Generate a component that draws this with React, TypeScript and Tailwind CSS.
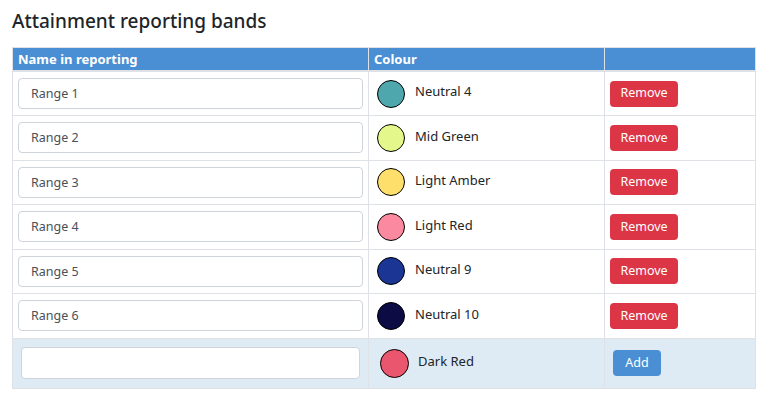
import React from 'react';

const bands = [
  { name: 'Range 1', colour: 'Neutral 4', hex: '#4fa7ae' },
  { name: 'Range 2', colour: 'Mid Green', hex: '#e4f78a' },
  { name: 'Range 3', colour: 'Light Amber', hex: '#fedf6b' },
  { name: 'Range 4', colour: 'Light Red', hex: '#fb8aa0' },
  { name: 'Range 5', colour: 'Neutral 9', hex: '#1a3593' },
  { name: 'Range 6', colour: 'Neutral 10', hex: '#0c0b44' },
];

export default function App() {
  return (
    <div className="bg-white w-[771px] h-[401px] px-3 pt-[7px] text-[#212529]" style={{ fontFamily: '"Noto Sans", "Open Sans", sans-serif' }}>
      <h2 className="text-[19px] font-medium leading-[28px] mb-[12px]">Attainment reporting bands</h2>

      <table className="w-[743px] border-collapse table-fixed text-[13px]">
        <colgroup>
          <col className="w-[356px]" />
          <col className="w-[236px]" />
          <col className="w-[151px]" />
        </colgroup>
        <thead>
          <tr className="bg-[#4a8fd4] text-white">
            <th className="h-[23px] px-[5px] py-0 text-left font-bold border border-[#dee2e6] border-b-2 leading-[22px]">Name in reporting</th>
            <th className="h-[23px] px-[5px] py-0 text-left font-bold border border-[#dee2e6] border-b-2 leading-[22px]">Colour</th>
            <th className="h-[23px] px-[5px] py-0 border border-[#dee2e6] border-b-2"></th>
          </tr>
        </thead>
        <tbody>
          {bands.map((b) => (
            <tr key={b.name}>
              <td className="h-[44.5px] px-[5px] py-0 border border-[#dee2e6]">
                <input
                  readOnly
                  value={b.name}
                  className="w-full h-[31px] rounded-[4px] border border-[#ced4da] px-3 text-[12.5px] text-[#495057] outline-none"
                />
              </td>
              <td className="h-[44.5px] pl-2 pr-[5px] py-0 border border-[#dee2e6]">
                <div className="flex items-center gap-[10px]">
                  <span className="w-[28px] h-[28px] rounded-full border border-black shrink-0" style={{ backgroundColor: b.hex }} />
                  <span className="text-[13px] -mt-[3px]">{b.colour}</span>
                </div>
              </td>
              <td className="h-[44.5px] px-[5px] py-0 border border-[#dee2e6]">
                <button className="w-[68px] h-[26px] rounded-[4px] bg-[#dc3545] text-white text-[12.5px] leading-none">Remove</button>
              </td>
            </tr>
          ))}
          <tr className="bg-[#deebf5]">
            <td className="h-[50px] px-[8px] py-0 border border-[#dee2e6]">
              <input className="w-full h-[32px] rounded-[4px] border border-[#ced4da] bg-white px-3 text-[13px] outline-none" />
            </td>
            <td className="h-[50px] pl-[11px] pr-[5px] py-0 border border-[#dee2e6]">
              <div className="flex items-center gap-[9px]">
                <span className="w-[29px] h-[29px] rounded-full border border-black shrink-0 bg-[#e9566e]" />
                <span className="text-[13px] -mt-[2px]">Dark Red</span>
              </div>
            </td>
            <td className="h-[50px] px-[8px] py-0 border border-[#dee2e6]">
              <button className="w-[48px] h-[26px] rounded-[4px] bg-[#4a8fd4] text-white text-[12.5px] leading-none">Add</button>
            </td>
          </tr>
        </tbody>
      </table>
    </div>
  );
}
